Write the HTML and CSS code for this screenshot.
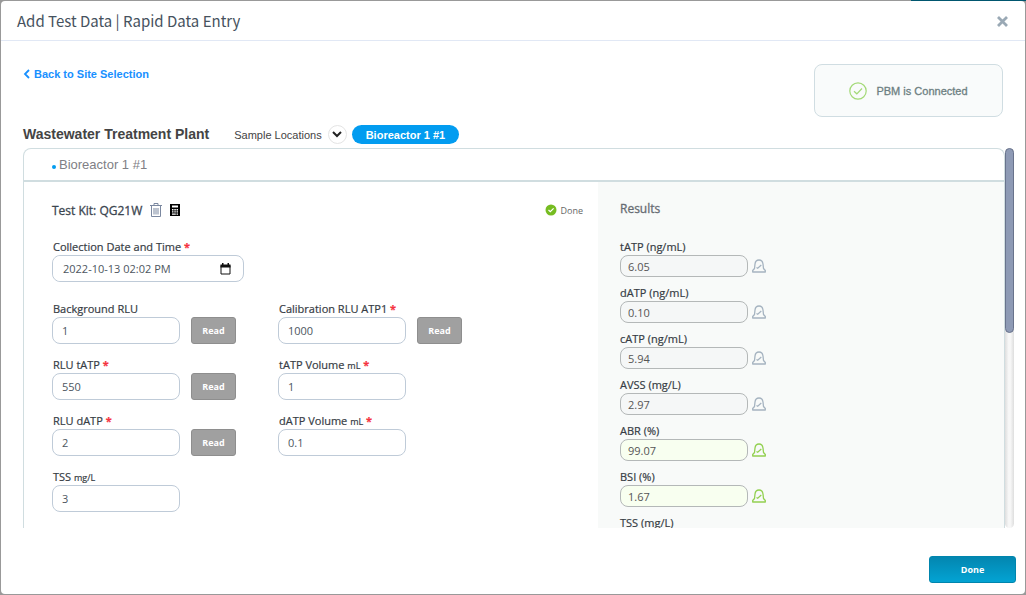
FILE: index.html
```html
<!DOCTYPE html>
<html lang="en">
<head>
    <meta charset="UTF-8">
    <meta name="viewport" content="width=device-width, initial-scale=1.0">
    <title>Add Test Data | Rapid Data Entry</title>
    <link rel="stylesheet" href="styles.css">
</head>
<body>
    <!-- shared icons -->
    <svg class="sprite" aria-hidden="true">
        <symbol id="bell" viewBox="0 0 14 14">
            <path d="M.7 13v-1.500L2.500 9.500 3 5C3.300 2.400 4.800 1 7 1s3.700 1.400 4 4l.5 4.500 1.800 2V13z" fill="none" stroke="currentColor" stroke-width="1.300" stroke-linejoin="round"/>
            <path d="M4.500 8.500l1.200.8L9.300 6" fill="none" stroke="currentColor" stroke-width="1.200"/>
        </symbol>
    </svg>

    <div class="modal">
        <header class="modal-header">
            <h1>Add Test Data | Rapid Data Entry</h1>
            <button type="button" class="close" aria-label="Close">
                <svg width="11" height="11" viewBox="0 0 11 11"><path d="M1 1l9 9M10 1l-9 9" stroke="#9aa9b5" stroke-width="2.800"/></svg>
            </button>
        </header>

        <main class="modal-body">
            <div class="top-row">
                <a href="#" class="back">
                    <svg width="7" height="10" viewBox="0 0 7 10"><path d="M6 1L2 5l4 4" fill="none" stroke="#1890ff" stroke-width="1.800"/></svg>
                    Back to Site Selection
                </a>
                <div class="pbm">
                    <svg width="18" height="18" viewBox="0 0 18 18"><circle cx="9" cy="9" r="8.200" fill="none" stroke="#a3d977" stroke-width="1.200"/><path d="M5 9.300l2.800 2.500L13 6.500" fill="none" stroke="#a3d977" stroke-width="1.200"/></svg>
                    PBM is Connected
                </div>
            </div>

            <div class="location-row">
                <h2>Wastewater Treatment Plant</h2>
                <span class="sample">Sample Locations</span>
                <button type="button" class="expand" aria-label="Show sample locations">
                    <svg width="10" height="7" viewBox="0 0 10 7"><path d="M1 1l4 4 4-4" fill="none" stroke="#222" stroke-width="2"/></svg>
                </button>
                <button type="button" class="pill">Bioreactor 1 #1</button>
            </div>

            <div class="scroll-area">
                <section class="card">
                    <h3 class="card-title">Bioreactor 1 #1</h3>
                    <div class="card-body">
                        <form class="entry">
                            <div class="kit-row">
                                <h4>Test Kit: QG21W</h4>
                                <button type="button" class="icon-btn" aria-label="Delete test kit">
                                    <svg width="12" height="14" viewBox="0 0 12 14" fill="none" stroke="#7b88a0"><path d="M0 2.500h12M4 2.500v-2h4v2M1.500 3v10.500h9V3M4 5v6.500M6 5v6.500M8 5v6.500"/></svg>
                                </button>
                                <button type="button" class="icon-btn" aria-label="Calculator">
                                    <svg width="10" height="12" viewBox="0 0 10 12"><path d="M0 0h10v12H0z" fill="#000"/><path d="M2 1.500h6v2H2zM2 5h1.500v1.500H2zM4.300 5h1.500v1.500H4.300zM6.500 5H8v1.500H6.500zM2 7.300h1.500v1.300H2zM4.300 7.300h1.500v1.300H4.300zM6.500 7.300H8v1.300H6.500zM2 9.500h3.800v1.200H2zM6.500 9.500H8v1.200H6.500z" fill="#fff"/></svg>
                                </button>
                                <span class="state">
                                    <svg width="12" height="12" viewBox="0 0 12 12"><circle cx="6" cy="6" r="5.500" fill="#76bc21"/><path d="M3.500 6l1.800 1.700L8.600 4.400" fill="none" stroke="#fff" stroke-width="1.200"/></svg>
                                    Done
                                </span>
                            </div>

                            <div class="field">
                                <label for="collected">Collection Date and Time <b>*</b></label>
                                <div class="date-box">
                                    <input type="text" id="collected" value="2022-10-13 02:02 PM">
                                    <button type="button" class="icon-btn" aria-label="Pick a date">
                                        <svg width="11" height="12" viewBox="0 0 11 12"><path d="M1 2.500h9v8.500H1z" fill="none" stroke="#111"/><path d="M.5 1.500h10V4.500H.5zM2 0h1.500v2H2zM7.500 0H9v2H7.500z" fill="#111"/></svg>
                                    </button>
                                </div>
                            </div>

                            <div class="columns">
                                <div class="column">
                                    <div class="field">
                                        <label for="background">Background RLU</label>
                                        <div class="control"><input type="text" id="background" value="1"><button type="button" class="read">Read</button></div>
                                    </div>
                                    <div class="field">
                                        <label for="rlu-tatp">RLU tATP <b>*</b></label>
                                        <div class="control"><input type="text" id="rlu-tatp" value="550"><button type="button" class="read">Read</button></div>
                                    </div>
                                    <div class="field">
                                        <label for="rlu-datp">RLU dATP <b>*</b></label>
                                        <div class="control"><input type="text" id="rlu-datp" value="2"><button type="button" class="read">Read</button></div>
                                    </div>
                                    <div class="field">
                                        <label for="tss">TSS <small>mg/L</small></label>
                                        <div class="control"><input type="text" id="tss" value="3"></div>
                                    </div>
                                </div>
                                <div class="column">
                                    <div class="field">
                                        <label for="calibration">Calibration RLU ATP1 <b>*</b></label>
                                        <div class="control"><input type="text" id="calibration" value="1000"><button type="button" class="read">Read</button></div>
                                    </div>
                                    <div class="field">
                                        <label for="vol-tatp">tATP Volume <small>mL</small> <b>*</b></label>
                                        <div class="control"><input type="text" id="vol-tatp" value="1"></div>
                                    </div>
                                    <div class="field">
                                        <label for="vol-datp">dATP Volume <small>mL</small> <b>*</b></label>
                                        <div class="control"><input type="text" id="vol-datp" value="0.1"></div>
                                    </div>
                                </div>
                            </div>
                        </form>

                        <div class="results">
                            <h4>Results</h4>
                            <div class="result">
                                <label for="r-tatp">tATP (ng/mL)</label>
                                <div class="value"><input type="text" id="r-tatp" value="6.05" readonly><svg class="bell"><use href="#bell"/></svg></div>
                            </div>
                            <div class="result">
                                <label for="r-datp">dATP (ng/mL)</label>
                                <div class="value"><input type="text" id="r-datp" value="0.10" readonly><svg class="bell"><use href="#bell"/></svg></div>
                            </div>
                            <div class="result">
                                <label for="r-catp">cATP (ng/mL)</label>
                                <div class="value"><input type="text" id="r-catp" value="5.94" readonly><svg class="bell"><use href="#bell"/></svg></div>
                            </div>
                            <div class="result">
                                <label for="r-avss">AVSS (mg/L)</label>
                                <div class="value"><input type="text" id="r-avss" value="2.97" readonly><svg class="bell"><use href="#bell"/></svg></div>
                            </div>
                            <div class="result good">
                                <label for="r-abr">ABR (%)</label>
                                <div class="value"><input type="text" id="r-abr" value="99.07" readonly><svg class="bell"><use href="#bell"/></svg></div>
                            </div>
                            <div class="result good">
                                <label for="r-bsi">BSI (%)</label>
                                <div class="value"><input type="text" id="r-bsi" value="1.67" readonly><svg class="bell"><use href="#bell"/></svg></div>
                            </div>
                            <div class="result">
                                <span class="label">TSS (mg/L)</span>
                            </div>
                        </div>
                    </div>
                </section>
                <div class="scrollbar"><div class="thumb"></div></div>
            </div>
        </main>

        <footer class="modal-footer">
            <button type="button" class="done">Done</button>
        </footer>
    </div>
</body>
</html>
```
FILE: styles.css
```css
* { box-sizing: border-box; }
body {
    margin: 0;
    height: 100vh;
    padding: 1px;
    background: linear-gradient(#00566f, #00566f) top right / 115px 1px no-repeat #999;
    font-family: "Open Sans", sans-serif;
    font-size: 11px;
    color: #3c4650;
}
h1, h2, h3, h4 { margin: 0; }
button, input { font: inherit; }
button { cursor: pointer; }
svg { display: block; flex: none; }
.sprite { display: none; }

.modal {
    display: flex;
    flex-direction: column;
    height: 100%;
    background: #fff;
    border-radius: 4px;
}
.modal-header {
    display: flex;
    align-items: center;
    justify-content: space-between;
    height: 40px;
    padding: 1px 17px 0 16px;
    border-bottom: 1px solid #e1e8f5;
}
.modal-header h1 {
    font-family: "Noto Sans CJK SC", sans-serif;
    font-size: 15px;
    line-height: 20px;
    font-weight: 400;
    color: #46525e;
}
.close, .icon-btn {
    padding: 0;
    border: none;
    background: none;
}
.modal-body {
    display: flex;
    flex-direction: column;
    flex: 1;
    min-height: 0;
    padding: 23px 11px 0 22px;
}
.top-row {
    display: flex;
    justify-content: space-between;
    align-items: flex-start;
    padding-right: 11px;
}
.back {
    display: flex;
    align-items: center;
    gap: 4px;
    line-height: 20px;
    font-family: "Liberation Sans", Arial, sans-serif;
    font-weight: bold;
    color: #1890ff;
    text-decoration: none;
}
.pbm {
    display: flex;
    align-items: center;
    justify-content: center;
    gap: 9px;
    width: 189px;
    height: 53px;
    border: 1px solid #d0dde2;
    border-radius: 8px;
    background: #f9fbfb;
    font-family: "Liberation Sans", Arial, sans-serif;
    font-size: 11px;
    color: #6d7f82;
    -webkit-text-stroke: 0.3px;
}
.location-row {
    display: flex;
    align-items: center;
    margin: 8px 0 4px;
    font-family: "Liberation Sans", Arial, sans-serif;
}
.location-row h2 {
    margin-right: 25px;
    font-size: 14px;
    line-height: 19px;
    color: #444;
}
.sample { font-size: 11px; color: #444; }
.expand {
    display: flex;
    align-items: center;
    justify-content: center;
    width: 19px;
    height: 19px;
    margin: 0 5px 0 6px;
    padding: 0;
    border: 1px solid #e4e4e4;
    border-radius: 50%;
    background: #fff;
}
.pill {
    height: 19px;
    padding: 0 14px;
    border: none;
    border-radius: 10px;
    background: #029cf0;
    font-weight: bold;
    color: #fff;
}

/* card and its scrollbar */
.scroll-area {
    display: flex;
    flex: 1;
    min-height: 0;
}
.card {
    display: flex;
    flex-direction: column;
    flex: 1;
    overflow: hidden;
    border: 1px solid #d0dde0;
    border-bottom: none;
    border-radius: 8px 8px 0 0;
}
.card-title {
    display: flex;
    align-items: center;
    height: 33px;
    flex: none;
    padding-left: 28px;
    border-bottom: 2px solid #d0dde0;
    font-family: "Liberation Sans", Arial, sans-serif;
    font-size: 13px;
    font-weight: 400;
    color: #808085;
}
.card-title::before {
    content: "";
    width: 4px;
    height: 4px;
    margin: 5px 3px 0 0;
    border-radius: 50%;
    background: #029cf0;
}
.card-body {
    display: grid;
    grid-template-columns: 574fr 406fr;
    flex: 1;
    min-height: 0;
}
.scrollbar {
    width: 9px;
    border-radius: 5px;
    background: linear-gradient(to right, #dedede, #f7f7f7 40%, #f7f7f7 60%, #dedede);
}
.thumb {
    height: 185px;
    border: 1px solid #69738c;
    border-radius: 5px;
    background: #8e9ab5;
}

.entry {
    min-width: 0;
    padding: 19px 15px 0 28px;
}
.kit-row {
    display: flex;
    align-items: center;
    gap: 8px;
    height: 18px;
    margin-bottom: 20px;
}
.kit-row h4, .results h4 {
    font-size: 12px;
    font-weight: 400;
    -webkit-text-stroke: 0.3px;
}
.state {
    display: flex;
    align-items: center;
    gap: 3px;
    margin-left: auto;
    font-size: 9px;
    color: #666;
}
.field { margin-bottom: 13px; }
label, .label {
    display: block;
    height: 16px;
    line-height: 16px;
    color: #363c44;
    -webkit-text-stroke: 0.2px;
}
.entry label { padding-left: 1px; }
label b { color: #f5333f; }
label small { font-size: 9px; }
.field input {
    width: 128px;
    height: 27px;
    padding: 0 9px;
    border: 1px solid #bfcbd8;
    border-radius: 8px;
    background: #fff;
    color: #4d5660;
}
.date-box {
    display: flex;
    align-items: center;
    width: 192px;
    height: 27px;
    padding-right: 12px;
    margin-bottom: 19px;
    border: 1px solid #bfcbd8;
    border-radius: 8px;
}
.field .date-box input {
    flex: 1;
    min-width: 0;
    height: 25px;
    padding: 0 10px;
    border: none;
}
.columns {
    display: flex;
    gap: 42px;
}
.column { width: 184px; }
.control {
    display: flex;
    gap: 11px;
}
.read {
    width: 45px;
    padding: 0;
    border: 1px solid #8e8e8e;
    border-radius: 3px;
    background: #a0a0a0;
    font-size: 9px;
    font-weight: bold;
    color: #fff;
}

.results {
    min-width: 0;
    padding: 18px 22px 0;
    background: #f8faf9;
}
.results h4 {
    margin-bottom: 22px;
    line-height: 17px;
    color: #666b72;
}
.result { margin-bottom: 8px; }
.value {
    display: flex;
    align-items: center;
    gap: 4px;
}
.value input {
    width: 128px;
    height: 22px;
    padding: 0 7px;
    border: 1px solid #b4b8b8;
    border-radius: 8px;
    background: #f5f7f7;
    color: #555;
}
.good .value input { background: #f8fff0; }
.bell {
    width: 14px;
    height: 14px;
    color: #a5b3c0;
}
.good .bell { color: #92d050; }

.modal-footer {
    display: flex;
    align-items: flex-start;
    justify-content: flex-end;
    height: 66px;
    padding: 28px 9px 0 0;
}
.done {
    width: 87px;
    height: 27px;
    border: 1px solid #0085ad;
    border-radius: 3px;
    background: linear-gradient(#0386b0, #03a3d3);
    font-size: 9px;
    font-weight: bold;
    color: #fff;
}
```
